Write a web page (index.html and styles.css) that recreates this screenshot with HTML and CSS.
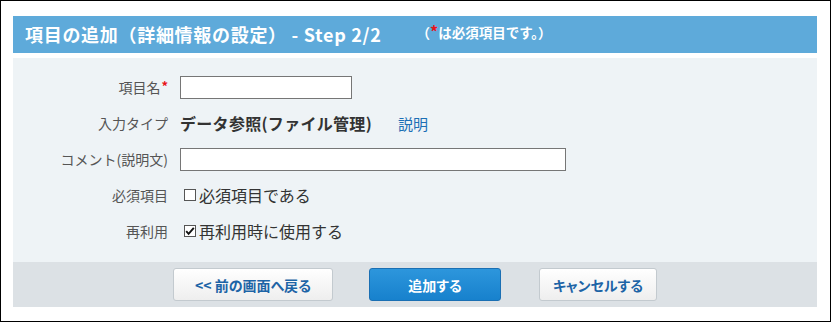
FILE: index.html
```html
<!DOCTYPE html>
<html lang="ja">
<head>
<meta charset="utf-8">
<title>項目の追加</title>
<link rel="stylesheet" href="styles.css">
</head>
<body>
<div class="frame">
  <div class="header">
    <h1 class="title">項目の追加（詳細情報の設定） - Step 2/2</h1>
    <span class="note">（<span class="req">*</span>は必須項目です。）</span>
  </div>
  <div class="panel">
    <div class="form">
      <div class="label">項目名<span class="req">*</span></div>
      <div class="field"><span class="input short"></span></div>

      <div class="label">入力タイプ</div>
      <div class="field"><span class="value">データ参照(ファイル管理)</span><a class="link">説明</a></div>

      <div class="label">コメント(説明文)</div>
      <div class="field"><span class="input long"></span></div>

      <div class="label">必須項目</div>
      <div class="field"><span class="check"></span><span class="opt">必須項目である</span></div>

      <div class="label">再利用</div>
      <div class="field"><span class="check"><svg viewBox="0 0 12 12" width="12" height="12"><path d="M2.2 6.2 L4.6 8.8 L9.8 2.8" fill="none" stroke="#111" stroke-width="1.9"/></svg></span><span class="opt">再利用時に使用する</span></div>
    </div>
  </div>
  <div class="buttons">
    <span class="btn back">&lt;&lt;&nbsp;前の画面へ戻る</span>
    <span class="btn primary">追加する</span>
    <span class="btn cancel">キャンセルする</span>
  </div>
</div>
</body>
</html>
```

FILE: styles.css
```css
* { box-sizing: border-box; }
html, body { margin: 0; padding: 0; background: #fff; }
body {
  font-family: "Noto Sans CJK JP", "Noto Sans", sans-serif;
  color: #333;
}
.frame {
  width: 831px;
  height: 322px;
  border: 1px solid #000;
  padding: 15px 0 0 12px;
}
.header {
  width: 804px;
  height: 37px;
  background: #5eaada;
  display: flex;
  align-items: flex-start;
  padding-left: 12px;
}
.title {
  margin: 0;
  font-size: 18px;
  font-weight: bold;
  color: #fff;
  line-height: 37px;
  white-space: nowrap;
  letter-spacing: 0.7px;
}
.note {
  margin-left: 35px;
  margin-top: 5px;
  font-size: 13.5px;
  font-weight: bold;
  color: #fff;
  line-height: 20px;
}
.note .req { font-size: 16px; }
.req { color: #e8121b; font-weight: bold; }
.panel {
  width: 804px;
  margin-top: 5px;
  height: 204px;
  background: #eef3f6;
  padding-top: 11px;
}
.form {
  display: grid;
  grid-template-columns: 155px 1fr;
  grid-auto-rows: 36px;
  column-gap: 12px;
}
.label {
  font-size: 14px;
  color: #555;
  text-align: right;
  display: flex;
  align-items: center;
  justify-content: flex-end;
}
.label .req { font-size: 13px; margin-left: 1px; align-self: flex-start; margin-top: 7px; }
.field {
  display: flex;
  align-items: center;
}
.input {
  display: block;
  height: 23px;
  background: #fff;
  border: 1px solid #767676;
}
.input.short { width: 172px; }
.input.long { width: 386px; }
.value {
  font-size: 16px;
  font-weight: bold;
  color: #333;
  letter-spacing: 0.3px;
}
.link {
  margin-left: 26px;
  font-size: 15px;
  color: #1c6fb5;
}
.check {
  display: block;
  width: 12px;
  height: 12px;
  margin-left: 4px;
  border: 1px solid #555;
  background: #fff;
  position: relative;
}
.check svg { display: block; position: absolute; left: -1px; top: -1px; }
.opt {
  margin-left: 3px;
  font-size: 16px;
  color: #333;
}
.buttons {
  width: 804px;
  height: 45px;
  background: #dce1e5;
  display: flex;
  justify-content: center;
  align-items: flex-start;
  padding-top: 6px;
  gap: 36px;
}
.btn {
  height: 33px;
  display: flex;
  align-items: center;
  justify-content: center;
  font-size: 14px;
  font-weight: bold;
  color: #1d64a6;
  border: 1px solid #c3cacf;
  border-radius: 3px;
  background: linear-gradient(#ffffff, #eeeeee);
  font-feature-settings: "palt";
}
.btn.back { width: 160px; }
.btn.primary {
  width: 132px;
  color: #fff;
  border-color: #1a6fb3;
  background: linear-gradient(#2d96dc, #1781cd);
}
.btn.cancel { width: 118px; margin-left: 2px; }
```
